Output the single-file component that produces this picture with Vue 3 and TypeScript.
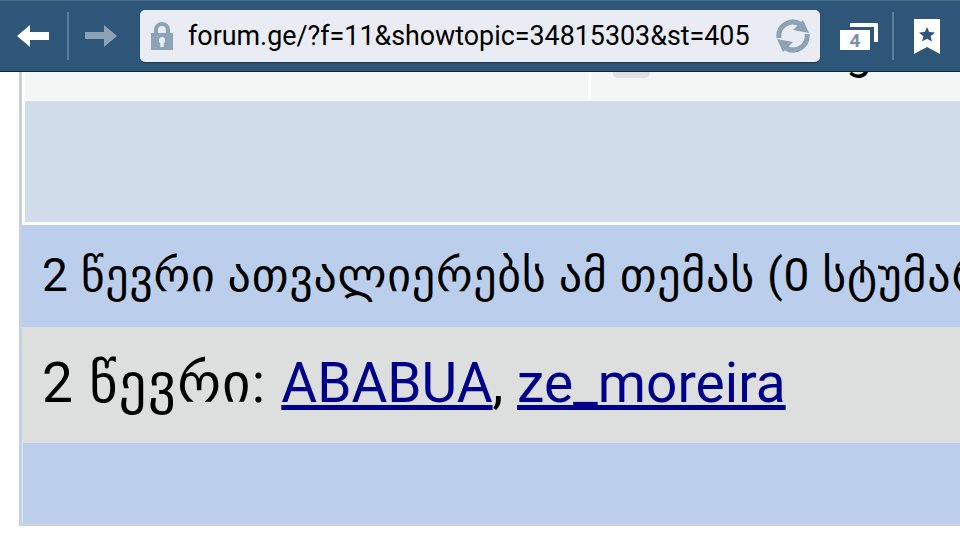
<script setup lang="ts">
const url = 'forum.ge/?f=11&showtopic=34815303&st=405'
const tabCount = 4
const users = ['ABABUA', 'ze_moreira']
</script>

<template>
  <div class="screen">
    <!-- toolbar -->
    <header class="toolbar">
      <button class="nav-btn">
        <svg width="32" height="22" viewBox="0 0 32 22"><path d="M0 11 13 0v7h19v8H13v7z" fill="#fff" /></svg>
      </button>
      <i class="divider div-nav"></i>
      <button class="nav-btn nav-fwd">
        <svg width="32" height="22" viewBox="0 0 32 22"><path d="M32 11 19 0v7H0v7h19v8z" fill="#8ba2b7" /></svg>
      </button>
      <div class="address">
        <svg class="lock" width="22" height="28" viewBox="0 0 22 28">
          <path fill-rule="evenodd" fill="#8ba2b7" d="M0 11h3V8a8 8 0 0 1 16 0v3h3v17H0zM7 11h8V8a4 4 0 0 0-8 0zM11 15a3.300 3.300 0 0 0-1.700 6.100V25h3.400v-3.900A3.300 3.300 0 0 0 11 15z" />
        </svg>
        <span class="url">{{ url }}</span>
        <svg class="reload" width="36" height="36" viewBox="0 0 36 36" fill="none">
          <path d="M4 20A14 14 0 0 1 25 6" stroke="#8ba2b7" stroke-width="5" />
          <path d="M32 16A14 14 0 0 1 11 30" stroke="#8ba2b7" stroke-width="5" />
          <path d="M28 2 34 15 18 12zM8 34 2 21 18 24z" fill="#8ba2b7" />
        </svg>
      </div>
      <div class="tabs">
        <svg class="tabs-back" width="28" height="19" viewBox="0 0 28 19"><path d="M0 0h28v19h-4V4H0z" fill="#fff" /></svg>
        <span class="tabs-count">{{ tabCount }}</span>
      </div>
      <i class="divider div-tabs"></i>
      <svg class="bookmark" width="26" height="35" viewBox="0 0 26 35">
        <path fill="#fff" d="M0 0h26v35L13 28 0 35z" />
        <path fill="#2e5678" d="m13 8 2.200 4.900 5.800.6-4.400 3.700 1.400 5.300-5-2.800-5 2.800 1.400-5.300L5 13.500l5.800-.6z" />
      </svg>
    </header>

    <!-- forum page, scrolled -->
    <main class="page">
      <div class="frame">
        <div class="top-row">
          <div class="top-cell"></div>
          <div class="top-cell">
            <span class="chk"></span>
            <span class="cut-text">g</span>
          </div>
        </div>
        <div class="spacer-row"></div>
        <div class="readers">2 წევრი ათვალიერებს ამ თემას (0 სტუმარი და 0 ანონიმი)</div>
        <div class="members">
          <span class="members-label">2 წევრი:</span>
          <template v-for="(u, i) in users" :key="u">
            <a href="#">{{ u }}</a><span v-if="i < users.length - 1">, </span>
          </template>
        </div>
        <div class="bottom-row"></div>
      </div>
    </main>
  </div>
</template>

<style>
html, body {
  margin: 0;
  background: #fff;
}
</style>

<style scoped>
.screen {
  width: 960px;
  height: 540px;
  overflow: hidden;
  font-family: Roboto, "DejaVu Sans", "Noto Sans", sans-serif;
  color: #000;
}

/* ==================== toolbar ==================== */
.toolbar {
  display: flex;
  align-items: center;
  box-sizing: border-box;
  height: 72px;
  padding-left: 17px;
  background: #2e5678;
  border-top: 1px solid #4a6d8a;
  border-bottom: 1px solid #0f2434;
}
.nav-btn {
  display: flex;
  padding: 0;
  border: 0;
  background: none;
}
.divider {
  width: 2px;
  height: 48px;
  background: #5d7d98;
}
.div-nav {
  margin: 0 16px 0 18px;
}
.nav-fwd {
  margin-right: 23px;
}
.address {
  display: flex;
  align-items: center;
  box-sizing: border-box;
  width: 680px;
  height: 52px;
  padding: 0 9px 0 11px;
  background: #e9edf3;
  border-radius: 5px;
  box-shadow: 0 1px 1px #1c3549;
}
.url {
  flex: 1;
  margin-left: 15px;
  font-size: 26.85px;
  white-space: nowrap;
}
.tabs {
  position: relative;
  width: 38px;
  height: 27px;
  margin-left: 20px;
}
.tabs-back {
  position: absolute;
  left: 10px;
  top: 0;
}
.tabs-count {
  position: absolute;
  left: 0;
  top: 7px;
  width: 30px;
  height: 20px;
  background: #fff;
  color: #7b8f9f;
  font-size: 19px;
  font-weight: 700;
  line-height: 21px;
  text-align: center;
}
.div-tabs {
  margin: 0 20px 0 14px;
}

/* ==================== page ==================== */
.page {
  padding-left: 19px;
}
.frame {
  border-left: 3px solid #c5d0e0;
  border-bottom: 3px solid #c5d0e0;
}
.top-row {
  display: grid;
  grid-template-columns: 563px 1fr;
  gap: 3px;
  height: 28px;
  margin-left: 3px;
  background: #fff;
  overflow: hidden;
}
.top-cell {
  position: relative;
  background: #f4f6f6;
}
.chk {
  position: absolute;
  left: 22px;
  top: -31px;
  width: 37px;
  height: 37px;
  border-radius: 5px;
  background: linear-gradient(#bdbdbd, #e2e2e2);
}
.cut-text {
  position: absolute;
  left: 255px;
  top: -42px;
  font-size: 46px;
  line-height: 46px;
}
.spacer-row {
  height: 121px;
  margin: 1px 0 0 3px;
  background: #d0dcea;
}
.readers {
  height: 102px;
  margin-top: 3px;
  padding-left: 20px;
  background: #bbcfec;
  font-size: 46px;
  letter-spacing: 0.72px;
  line-height: 100px;
  white-space: nowrap;
  overflow: hidden;
}
.members {
  height: 116px;
  padding-left: 20px;
  background: #dddfdf;
  font-size: 55px;
  line-height: 112px;
  white-space: nowrap;
}
.members-label {
  margin-right: 15px;
  letter-spacing: 1.2px;
}
.members a {
  color: #00008b;
  text-decoration: underline;
}
.bottom-row {
  height: 80px;
  background: #bbcfec;
  border-left: 1px solid #dfe7f2;
}
</style>
